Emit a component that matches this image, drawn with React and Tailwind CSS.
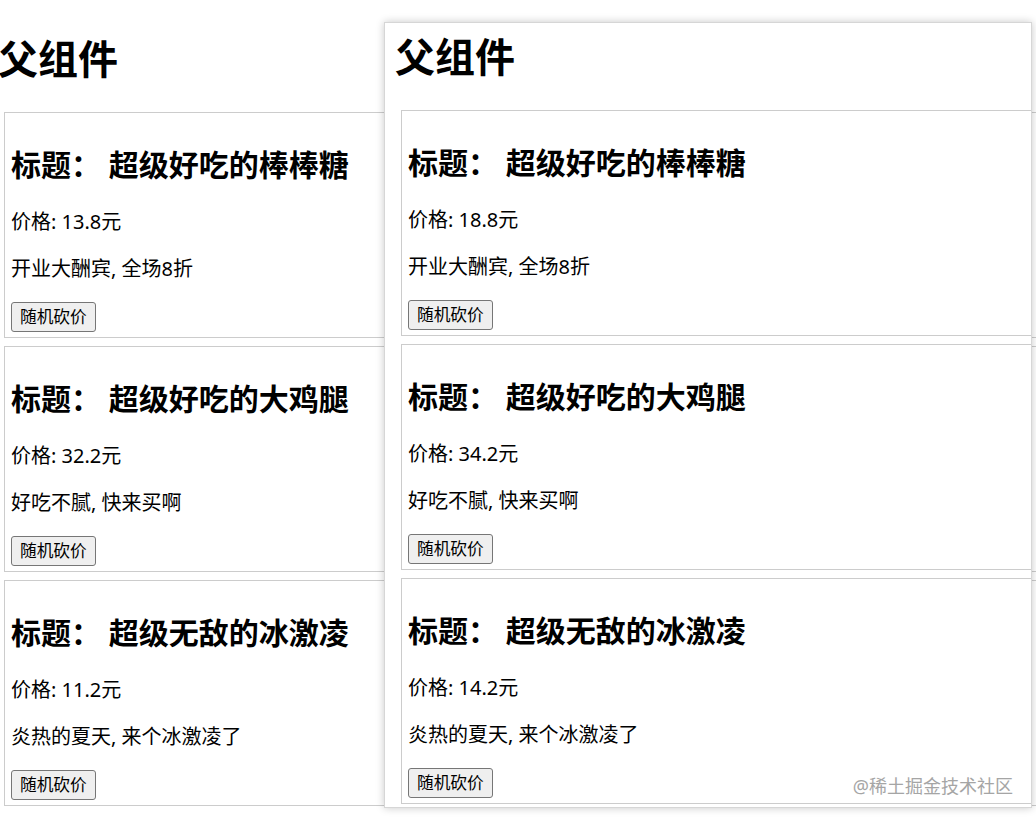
import React from "react";

const items = [
  { title: "超级好吃的棒棒糖", desc: "开业大酬宾, 全场8折" },
  { title: "超级好吃的大鸡腿", desc: "好吃不腻, 快来买啊" },
  { title: "超级无敌的冰激凌", desc: "炎热的夏天, 来个冰激凌了" },
];

function Card({ title, price, desc, first }) {
  return (
    <div
      className={
        "ml-[6px] w-[1200px] border border-[#cccccc] px-[6px] pt-[32px] pb-[5px] flex flex-col items-start " +
        (first ? "" : "mt-[8px]")
      }
    >
      <h2 className="h-[40px] text-[30px] leading-[40px] font-bold whitespace-nowrap text-black">
        标题： {title}
      </h2>
      <p className="mt-[24px] h-[26px] text-[20px] leading-[26px] text-black whitespace-nowrap">
        价格: {price}元
      </p>
      <p className="mt-[21px] h-[26px] text-[20px] leading-[26px] text-black whitespace-nowrap">
        {desc}
      </p>
      <button className="mt-[20px] h-[30px] px-[8px] text-[16.7px] leading-[28px] text-black bg-[#efefef] border border-[#767676] rounded-[3px] whitespace-nowrap">
        随机砍价
      </button>
    </div>
  );
}

function Page({ prices }) {
  return (
    <div className="pt-[10px] px-[10px]">
      <h1 className="h-[48px] text-[40px] leading-[48px] font-bold text-black mb-[29px] whitespace-nowrap">
        父组件
      </h1>
      <div className="flex flex-col">
        {items.map((it, i) => (
          <Card key={i} first={i === 0} title={it.title} desc={it.desc} price={prices[i]} />
        ))}
      </div>
    </div>
  );
}

export default function App() {
  return (
    <div className="relative w-[1036px] h-[818px] overflow-hidden bg-white font-['Noto_Sans','Noto_Sans_CJK_SC',sans-serif]">
      <div className="absolute left-[-12px] top-[25px] w-[1100px] h-[800px] bg-white">
        <Page prices={["13.8", "32.2", "11.2"]} />
      </div>
      <div className="absolute left-[384px] top-[22px] w-[648px] h-[786px] overflow-hidden bg-white border border-[#d6d6d6] shadow-[0_0_8px_rgba(0,0,0,0.22)]">
        <Page prices={["18.8", "34.2", "14.2"]} />
      </div>
      <div className="absolute right-[23px] bottom-[20px] text-[18px] leading-[24px] text-[#a5a5a5] whitespace-nowrap">
        @稀土掘金技术社区
      </div>
    </div>
  );
}
